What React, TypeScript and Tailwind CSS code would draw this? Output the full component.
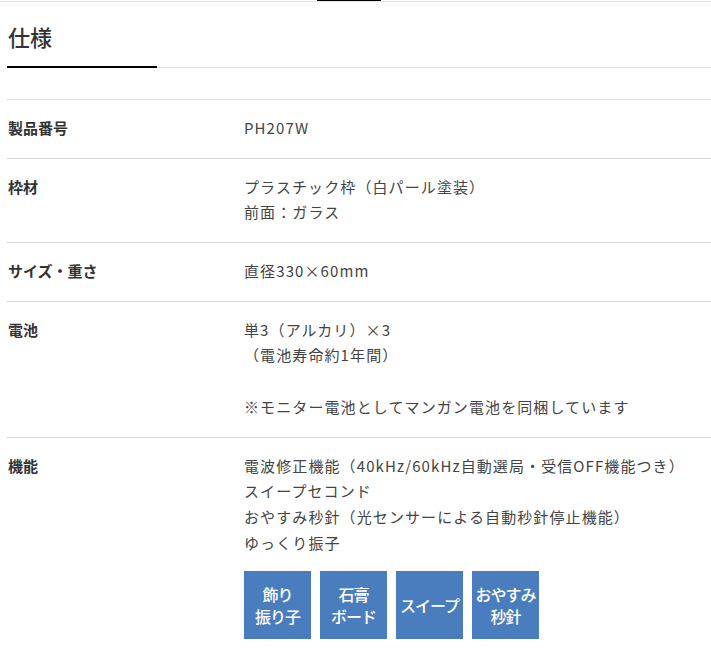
import React from 'react';

interface SpecRow {
  label: string;
  lines: string[];
  badges?: string[][];
}

const rows: SpecRow[] = [
  { label: '製品番号', lines: ['PH207W'] },
  { label: '枠材', lines: ['プラスチック枠（白パール塗装）', '前面：ガラス'] },
  { label: 'サイズ・重さ', lines: ['直径330×60mm'] },
  {
    label: '電池',
    lines: ['単3（アルカリ）×3', '（電池寿命約1年間）', '', '※モニター電池としてマンガン電池を同梱しています'],
  },
  {
    label: '機能',
    lines: [
      '電波修正機能（40kHz/60kHz自動選局・受信OFF機能つき）',
      'スイープセコンド',
      'おやすみ秒針（光センサーによる自動秒針停止機能）',
      'ゆっくり振子',
    ],
    badges: [
      ['飾り', '振り子'],
      ['石膏', 'ボード'],
      ['スイープ'],
      ['おやすみ', '秒針'],
    ],
  },
];

const font = 'font-["Noto_Sans_CJK_JP","Liberation_Sans",sans-serif]';

export default function App() {
  return (
    <div className={`w-[711px] min-h-[654px] bg-white text-[#333] ${font}`}>
      {/* Top tab strip */}
      <div className="flex h-[2px] border-b border-[#e5e5e5]">
        <div className="ml-[317px] h-px w-[64px] bg-black" />
      </div>

      <div className="pl-[7px]">
        {/* Section heading */}
        <h2 className="pt-[19px] pl-px text-[22px] leading-[30px] font-medium">仕様</h2>
        <div className="mt-[15px] flex items-end">
          <div className="h-[2px] w-[150px] bg-black" />
          <div className="h-px flex-1 bg-[#dcdcdc]" />
        </div>

        {/* Spec table */}
        <div className="mt-[31px] border-t border-[#dcdcdc]">
          {rows.map((row) => (
            <div
              key={row.label}
              className="grid grid-cols-[237px_1fr] border-b border-[#dcdcdc] pt-[15px] pb-[17px] text-[15px] leading-[25.7px]"
            >
              <div className="pl-px font-bold text-[#333]">{row.label}</div>
              <div className="text-[#444] tracking-[1.1px]">
                {row.lines.map((line, i) => (
                  <div key={i} className="h-[25.7px] whitespace-nowrap">
                    {line}
                  </div>
                ))}
                {row.badges && (
                  <div className="mt-[16px] flex gap-[9px]">
                    {row.badges.map((b) => (
                      <div
                        key={b.join('')}
                        className="flex h-[68px] w-[67px] flex-col items-center justify-center bg-[#4a7dbd] text-[16px] leading-[22px] font-medium tracking-[-1px] whitespace-nowrap text-white"
                      >
                        {b.map((t) => (
                          <span key={t}>{t}</span>
                        ))}
                      </div>
                    ))}
                  </div>
                )}
              </div>
            </div>
          ))}
        </div>
      </div>
    </div>
  );
}
